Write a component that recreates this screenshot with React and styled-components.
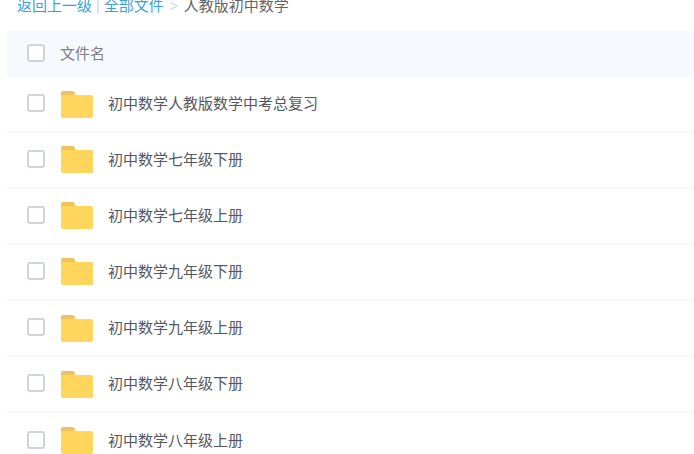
import React from "react";
import styled, { createGlobalStyle } from "styled-components";

const GlobalStyle = createGlobalStyle`
  html, body {
    margin: 0;
    padding: 0;
    height: 100%;
    overflow: hidden;
    background: #fff;
    font-family: "Liberation Sans", "Noto Sans CJK SC", sans-serif;
  }
`;

const Page = styled.div`
  height: 454px;
  overflow: hidden;
  padding-left: 7px;
`;

const Crumbs = styled.div`
  display: flex;
  align-items: flex-start;
  height: 37px;
  margin-top: -6px;
  padding-left: 10px;
  font-size: 15px;
  line-height: 24px;
  color: #666;
`;

const CrumbLink = styled.a`
  color: #3b9fd8;
`;

const Divider = styled.span`
  color: #c5d5e0;
  margin: 0 4px;
  font-size: 14px;
`;

const Arrow = styled.span`
  color: #d5d9de;
  margin: 0 6px;
  font-size: 14px;
`;

const Head = styled.div`
  display: flex;
  align-items: center;
  height: 46px;
  padding-left: 20px;
  background: #f6f9fe;
  color: #808080;
  font-size: 15px;
`;

const Check = styled.span`
  flex: none;
  box-sizing: border-box;
  width: 18px;
  height: 18px;
  margin-bottom: 2px;
  border: 2px solid #d0d3da;
  border-radius: 3px;
  background: #fff;
`;

const HeadLabel = styled.span`
  margin-left: 15px;
  padding-bottom: 3px;
`;

const Row = styled.div`
  display: flex;
  align-items: center;
  box-sizing: border-box;
  height: 56.2px;
  padding-left: 20px;
  border-bottom: 1px solid #f5f6f8;

  &:first-child {
    height: 55px;
  }
`;

const FolderIcon = styled.svg`
  flex: none;
  width: 32px;
  height: 27px;
  margin-left: 16px;
`;

const Name = styled.span`
  margin-left: 15px;
  padding-bottom: 3px;
  font-size: 15px;
  color: #55585f;
`;

const folders = [
  "初中数学人教版数学中考总复习",
  "初中数学七年级下册",
  "初中数学七年级上册",
  "初中数学九年级下册",
  "初中数学九年级上册",
  "初中数学八年级下册",
  "初中数学八年级上册",
];

function Folder() {
  return (
    <FolderIcon viewBox="0 0 32 27">
      <path d="M0 2a2 2 0 0 1 2-2h9a3 3 0 0 1 3 2l.5 2H0z" fill="#ecc360" />
      <path d="M0 4h30a2 2 0 0 1 2 2v19a2 2 0 0 1-2 2H2a2 2 0 0 1-2-2z" fill="#ffd55c" />
    </FolderIcon>
  );
}

export default function App() {
  return (
    <Page>
      <GlobalStyle />
      <Crumbs>
        <CrumbLink>返回上一级</CrumbLink>
        <Divider>|</Divider>
        <CrumbLink>全部文件</CrumbLink>
        <Arrow>&gt;</Arrow>
        <span>人教版初中数学</span>
      </Crumbs>
      <Head>
        <Check />
        <HeadLabel>文件名</HeadLabel>
      </Head>
      <div>
        {folders.map((name, i) => (
          <Row key={i}>
            <Check />
            <Folder />
            <Name>{name}</Name>
          </Row>
        ))}
      </div>
    </Page>
  );
}
